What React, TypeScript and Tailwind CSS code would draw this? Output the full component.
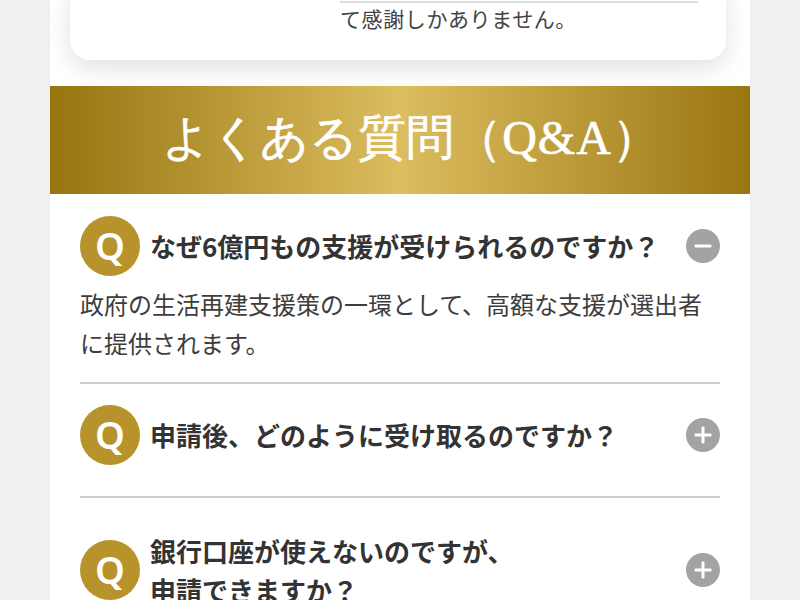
import React from "react";

const sans = "font-['Noto_Sans_CJK_JP','Noto_Sans',sans-serif]";

function QBadge() {
  return (
    <span className="flex h-[60px] w-[60px] shrink-0 items-center justify-center rounded-full bg-[#b8922a] pb-[3px] font-['Noto_Sans','Noto_Sans_CJK_JP',sans-serif] text-[38px] font-semibold leading-none text-white">
      Q
    </span>
  );
}

function Toggle({ open }: { open?: boolean }) {
  return (
    <span className="flex h-[34px] w-[34px] shrink-0 items-center justify-center rounded-full bg-[#a3a3a3]">
      <svg width="20" height="20" viewBox="0 0 20 20" aria-hidden="true">
        <rect x="1.5" y="8.5" width="17" height="3" rx="1" fill="#fff" />
        {!open && <rect x="8.5" y="1.5" width="3" height="17" rx="1" fill="#fff" />}
      </svg>
    </span>
  );
}

export default function App() {
  return (
    <div className={`h-[600px] overflow-hidden bg-[#f0f0f0] ${sans}`}>
      <div className="mx-auto h-[600px] w-[700px] overflow-hidden bg-white">
        <div className="px-[20px] pb-[26px]">
          <div className="-mt-[20px] flex h-[80px] w-[656px] justify-end rounded-[20px] bg-white pr-[28px] shadow-[0_8px_24px_rgba(0,0,0,0.12)]">
            <div className="w-[358px] pt-[21px]">
              <div className="h-[2px] bg-[#dddddd]" />
              <p className="text-[21px] leading-[30px] tracking-[0.6px] text-[#444444]">て感謝しかありません。</p>
            </div>
          </div>
        </div>

        <h2 className="flex h-[108px] items-center justify-center bg-[linear-gradient(90deg,#967410_0%,#dcbd5f_50%,#9a7612_100%)] pb-[4px] pl-[22px] font-['Liberation_Serif',serif] text-[48px] font-normal leading-none text-white [-webkit-text-stroke:0.6px_white]">
          よくある質問（<span className="tracking-[1px]">Q&amp;A</span>）
        </h2>

        <div className="px-[30px] text-[#333333]">
          <section className="border-b-2 border-[#cccccc] pt-[22px] pb-[20px]">
            <div className="flex items-center">
              <QBadge />
              <h3 className="ml-[10px] flex-1 text-[26px] font-bold leading-[40px]">なぜ6億円もの支援が受けられるのですか？</h3>
              <Toggle open />
            </div>
            <p className="mt-[8px] text-[24px] leading-[39px] text-[#3d3d3d]">
              政府の生活再建支援策の一環として、高額な支援が選出者に提供されます。
            </p>
          </section>

          <section className="border-b-2 border-[#cccccc] pt-[21px] pb-[31px]">
            <div className="flex items-center">
              <QBadge />
              <h3 className="ml-[10px] flex-1 text-[26px] font-bold leading-[40px]">申請後、どのように受け取るのですか？</h3>
              <Toggle />
            </div>
          </section>

          <section className="pt-[33px]">
            <div className="flex items-center">
              <QBadge />
              <h3 className="ml-[10px] flex-1 text-[26px] font-bold leading-[39px]">
                銀行口座が使えないのですが、
                <br />
                申請できますか？
              </h3>
              <Toggle />
            </div>
          </section>
        </div>
      </div>
    </div>
  );
}
